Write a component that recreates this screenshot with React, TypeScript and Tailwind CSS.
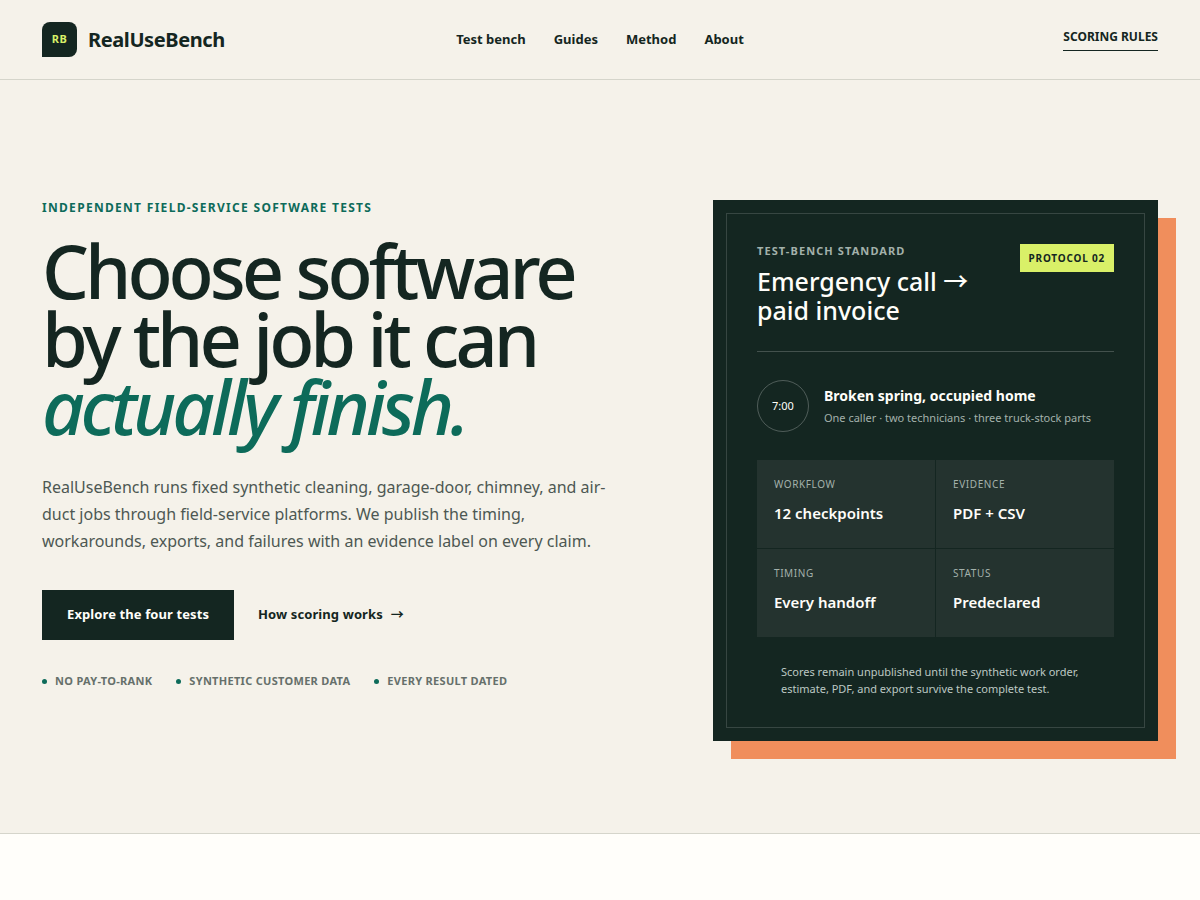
const navLinks = ["Test bench", "Guides", "Method", "About"];

const trustNotes = ["No pay-to-rank", "Synthetic customer data", "Every result dated"];

const facts = [
  { label: "Workflow", value: "12 checkpoints" },
  { label: "Evidence", value: "PDF + CSV" },
  { label: "Timing", value: "Every handoff" },
  { label: "Status", value: "Predeclared" },
];

function Header() {
  return (
    <header className="border-b border-[#d5d5cb]">
      <div className="grid grid-cols-[1fr_auto_1fr] items-center h-[79px] px-[42px]">
        <a href="#" className="flex items-center gap-[11px] justify-self-start">
          <span className="grid place-items-center size-[35px] rounded-lg rounded-bl-none bg-[#142621] text-[11px] font-bold tracking-[0.5px] text-[#d9f068]">
            RB
          </span>
          <span className="text-xl font-bold tracking-[-0.4px]">RealUseBench</span>
        </a>
        <nav className="flex gap-7 text-[13px] font-bold">
          {navLinks.map((link) => (
            <a key={link} href="#">
              {link}
            </a>
          ))}
        </nav>
        <a href="#" className="justify-self-end border-b border-[#142621] pb-1 text-xs leading-[18px] font-bold uppercase">
          Scoring rules
        </a>
      </div>
    </header>
  );
}

function BenchCard() {
  return (
    <aside className="relative bg-[#142621] p-11 text-[#fffefa] shadow-[18px_18px_0_#f08e5c]">
      <div className="pointer-events-none absolute inset-[13px] border border-white/15" />
      <div className="flex items-start justify-between border-b border-white/20 pb-[26px]">
        <div>
          <p className="text-[11px] leading-[14px] font-bold uppercase tracking-[1.1px] text-[#a3b1ab]">Test-bench standard</p>
          <h2 className="mt-[9px] text-[25px] leading-[29px] font-medium">
            Emergency call →<br />
            paid invoice
          </h2>
        </div>
        <span className="bg-[#d9f068] px-[9px] py-[6px] text-[10px] leading-4 font-bold uppercase tracking-[0.8px] text-[#142621]">
          Protocol 02
        </span>
      </div>

      <div className="flex items-center gap-[15px] py-7">
        <span className="grid place-items-center size-[52px] shrink-0 rounded-full border border-white/25 text-[11px]">7:00</span>
        <div>
          <h3 className="text-sm leading-6 font-bold">Broken spring, occupied home</h3>
          <p className="text-[11px] leading-5 text-[#a3b1ab]">One caller · two technicians · three truck-stock parts</p>
        </div>
      </div>

      <dl className="grid grid-cols-2 gap-px">
        {facts.map((fact) => (
          <div key={fact.label} className="h-22 bg-[#24332f] px-[17px] py-4">
            <dt className="text-[10px] leading-4 uppercase tracking-[0.6px] text-[#a3b1ab]">{fact.label}</dt>
            <dd className="mt-[11px] text-[15px] leading-5 font-semibold">{fact.value}</dd>
          </div>
        ))}
      </dl>

      <p className="mt-[26px] px-6 text-[11px] leading-[17px] text-[#bcc8c3]">
        Scores remain unpublished until the synthetic work order, estimate, PDF, and export survive the complete test.
      </p>
    </aside>
  );
}

function Hero() {
  return (
    <section className="grid grid-cols-[1.31fr_1fr] items-start gap-[88px] border-b border-[#d5d5cb] px-[42px] pt-30 pb-23">
      <div>
        <p className="text-xs leading-4 font-bold uppercase tracking-[1.3px] text-[#0d6b5a]">
          Independent field-service software tests
        </p>
        <h1 className="mt-[21px] text-[74px] leading-[68px] font-medium tracking-[-4px]">
          Choose software
          <br />
          by the job it can
          <br />
          <em className="text-[#0d6b5a]">actually finish.</em>
        </h1>
        <p className="mt-[33px] max-w-[580px] text-base leading-[27px] text-[#4d5853]">
          RealUseBench runs fixed synthetic cleaning, garage-door, chimney, and air-duct jobs through field-service
          platforms. We publish the timing, workarounds, exports, and failures with an evidence label on every claim.
        </p>
        <div className="mt-[35px] flex items-center gap-6 text-[13px] font-bold tracking-[0.1px]">
          <button type="button" className="h-[50px] bg-[#142621] px-[25px] text-[#fffefa]">
            Explore the four tests
          </button>
          <a href="#" className="flex gap-2">
            How scoring works <span>→</span>
          </a>
        </div>
        <ul className="mt-8 flex gap-6 text-[11px] leading-[18px] font-bold uppercase tracking-[0.3px] text-[#66706b]">
          {trustNotes.map((note) => (
            <li key={note} className="flex items-center gap-2">
              <span className="size-[5px] rounded-full bg-[#0d6b5a]" />
              {note}
            </li>
          ))}
        </ul>
      </div>
      <BenchCard />
    </section>
  );
}

export default function App() {
  return (
    <div className="flex min-h-screen flex-col bg-[#f5f2ea] font-['Noto_Sans','Noto_Sans_CJK_SC',sans-serif] text-[#142621]">
      <Header />
      <Hero />
      <section className="grow bg-[#fffefa]" />
    </div>
  );
}
